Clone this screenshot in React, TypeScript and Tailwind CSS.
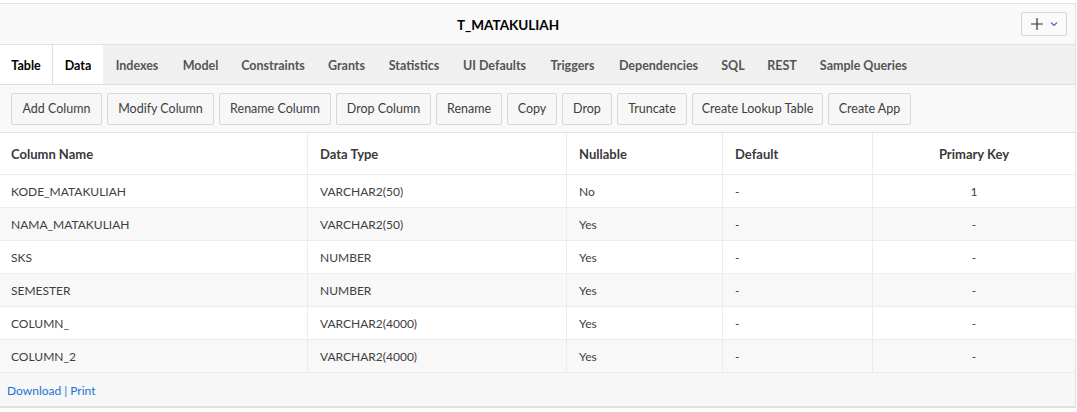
import * as React from "react"

// tab label + width taken from the reference strip
const tabs: [string, string][] = [
  ["Table", "w-[53px]"],
  ["Data", "w-[50px]"],
  ["Indexes", "w-[68px]"],
  ["Model", "w-[59px]"],
  ["Constraints", "w-[86px]"],
  ["Grants", "w-[61px]"],
  ["Statistics", "w-[74px]"],
  ["UI Defaults", "w-[87px]"],
  ["Triggers", "w-[69px]"],
  ["Dependencies", "w-[103px]"],
  ["SQL", "w-[46px]"],
  ["REST", "w-[52px]"],
  ["Sample Queries", "w-[111px]"],
]

const actions: [string, string][] = [
  ["Add Column", "w-[91px]"],
  ["Modify Column", "w-[107px]"],
  ["Rename Column", "w-[112px]"],
  ["Drop Column", "w-[95px]"],
  ["Rename", "w-[66px]"],
  ["Copy", "w-[50px]"],
  ["Drop", "w-[50px]"],
  ["Truncate", "w-[70px]"],
  ["Create Lookup Table", "w-[131px]"],
  ["Create App", "w-[83px]"],
]

const rows = [
  { name: "KODE_MATAKULIAH", type: "VARCHAR2(50)", nullable: "No", def: "-", pk: "1" },
  { name: "NAMA_MATAKULIAH", type: "VARCHAR2(50)", nullable: "Yes", def: "-", pk: "-" },
  { name: "SKS", type: "NUMBER", nullable: "Yes", def: "-", pk: "-" },
  { name: "SEMESTER", type: "NUMBER", nullable: "Yes", def: "-", pk: "-" },
  { name: "COLUMN_", type: "VARCHAR2(4000)", nullable: "Yes", def: "-", pk: "-" },
  { name: "COLUMN_2", type: "VARCHAR2(4000)", nullable: "Yes", def: "-", pk: "-" },
]

const gridCols = "grid grid-cols-[308px_259px_156px_150px_1fr]"

export default function App() {
  return (
    <div className="w-[1077px] h-[412px] bg-white pt-[3px] font-['Lato','Liberation_Sans',sans-serif] text-[13px] text-[#404040]">
      <div className="w-[1076px] border-t border-r border-b-2 border-[#e0e0e0]">
        {/* Title bar */}
        <div className="h-[41px] flex items-center bg-[#f9f9f9] border-b border-[#e0e0e0] pr-[8px]">
          <div className="flex-1 text-center font-bold text-[13.5px] text-black pr-[5px] pt-[2px]">T_MATAKULIAH</div>
          <button className="w-[46px] h-[24px] flex items-center justify-center gap-[6px] border border-[#d4d4d4] rounded-[2px] bg-[#fafafa]">
            <svg width="14" height="14" viewBox="0 0 14 14">
              <path d="M7 1v12M1 7h12" stroke="#303030" strokeWidth="1.2" />
            </svg>
            <svg width="8" height="6" viewBox="0 0 8 6">
              <path d="M1 1.5l3 3 3-3" stroke="#4a6a9a" strokeWidth="1.1" fill="none" />
            </svg>
          </button>
        </div>

        {/* Tabs */}
        <div className="h-[40px] flex bg-[#f0f0f0] border-b border-[#e0e0e0] text-[12.5px] font-bold">
          {tabs.map(([t, w], i) => (
            <div
              key={t}
              className={
                w +
                (i < 2
                  ? " h-full flex items-center justify-center pt-[3px] bg-white text-black" + (i === 0 ? " border-r border-[#e0e0e0]" : "")
                  : " h-full flex items-center justify-center pt-[3px] text-[#555555]")
              }
            >
              {t}
            </div>
          ))}
        </div>

        {/* Toolbar */}
        <div className="h-[48px] flex items-center gap-[5px] px-[11px] bg-[#f9f9f9] border-b border-[#e0e0e0]">
          {actions.map(([a, w]) => (
            <button
              key={a}
              className={w + " h-[32px] pt-[2px] border border-[#d8d8d8] rounded-[2px] bg-[#f7f7f7] text-[12.5px] text-[#404040] whitespace-nowrap"}
            >
              {a}
            </button>
          ))}
        </div>

        {/* Table */}
        <div className={gridCols + " h-[42px] border-b border-[#ececec] font-bold text-[#3a3a3a]"}>
          <div className="flex items-center pt-[2px] pl-[11px] border-r border-[#ececec]">Column Name</div>
          <div className="flex items-center pt-[2px] pl-[12px] border-r border-[#ececec]">Data Type</div>
          <div className="flex items-center pt-[2px] pl-[12px] border-r border-[#ececec]">Nullable</div>
          <div className="flex items-center pt-[2px] pl-[12px] border-r border-[#ececec]">Default</div>
          <div className="flex items-center pt-[2px] justify-center">Primary Key</div>
        </div>
        {rows.map((r, i) => (
          <div
            key={r.name}
            className={gridCols + " h-[33px] border-b border-[#ececec] text-[12px] " + (i % 2 ? "bg-[#f8f8f8]" : "bg-white")}
          >
            <div className="flex items-center pt-[2px] pl-[11px] border-r border-[#ececec]">{r.name}</div>
            <div className="flex items-center pt-[2px] pl-[12px] border-r border-[#ececec]">{r.type}</div>
            <div className="flex items-center pt-[2px] pl-[12px] border-r border-[#ececec]">{r.nullable}</div>
            <div className="flex items-center pt-[2px] pl-[12px] border-r border-[#ececec]">{r.def}</div>
            <div className="flex items-center pt-[2px] justify-center">{r.pk}</div>
          </div>
        ))}

        {/* Footer */}
        <div className="h-[33px] flex items-center pt-[2px] px-[7px] bg-[#f7f7f7] text-[12px]">
          <a className="text-[#1a73d0]">Download</a>
          <span className="mx-[3px] text-[#1a73d0]">|</span>
          <a className="text-[#1a73d0]">Print</a>
        </div>
      </div>
    </div>
  )
}
